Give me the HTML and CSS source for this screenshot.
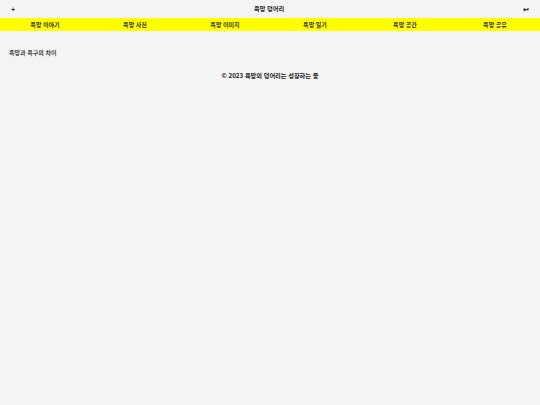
FILE: index.html
```html
<!DOCTYPE html>
<html lang="ko">
<head>
<meta charset="utf-8">
<link rel="stylesheet" href="styles.css">
</head>
<body>
<header class="top">
  <span class="icon">+</span>
  <h1 class="title">욕망 덩어리</h1>
  <span class="icon">↩</span>
</header>
<nav class="nav">
  <a>욕망 이야기</a>
  <a>욕망 사전</a>
  <a>욕망 이미지</a>
  <a>욕망 일기</a>
  <a>욕망 공간</a>
  <a>욕망 공유</a>
</nav>
<main class="content">
  <p class="post">욕망과 욕구의 차이</p>
</main>
<footer class="foot">© 2023 욕망의 덩어리는 성장하는 중</footer>
</body>
</html>
```
FILE: styles.css
```css
html, body {
  margin: 0;
  padding: 0;
  background: #f4f4f4;
  font-family: "Noto Sans CJK KR", "Noto Sans", sans-serif;
  color: #222;
}
.top {
  height: 18px;
  display: flex;
  align-items: center;
  justify-content: space-between;
  padding: 0 11px;
}
.icon {
  font-size: 7px;
  font-weight: 700;
  line-height: 1;
  color: #222;
}
.title {
  margin: 0;
  font-size: 6.2px;
  font-weight: 700;
  line-height: 1;
}
.nav {
  height: 13px;
  background: #ffff00;
  display: grid;
  grid-template-columns: repeat(6, 1fr);
  align-items: center;
}
.nav a {
  text-align: center;
  font-size: 6px;
  font-weight: 700;
  line-height: 1;
  color: #333;
}
.content {
  padding: 19px 9px 0;
}
.post {
  margin: 0;
  font-size: 6px;
  font-weight: 700;
  line-height: 1;
  color: #444;
}
.foot {
  text-align: center;
  font-size: 6.2px;
  font-weight: 700;
  line-height: 1;
  margin-top: 17px;
  color: #1a1a1a;
}
```
